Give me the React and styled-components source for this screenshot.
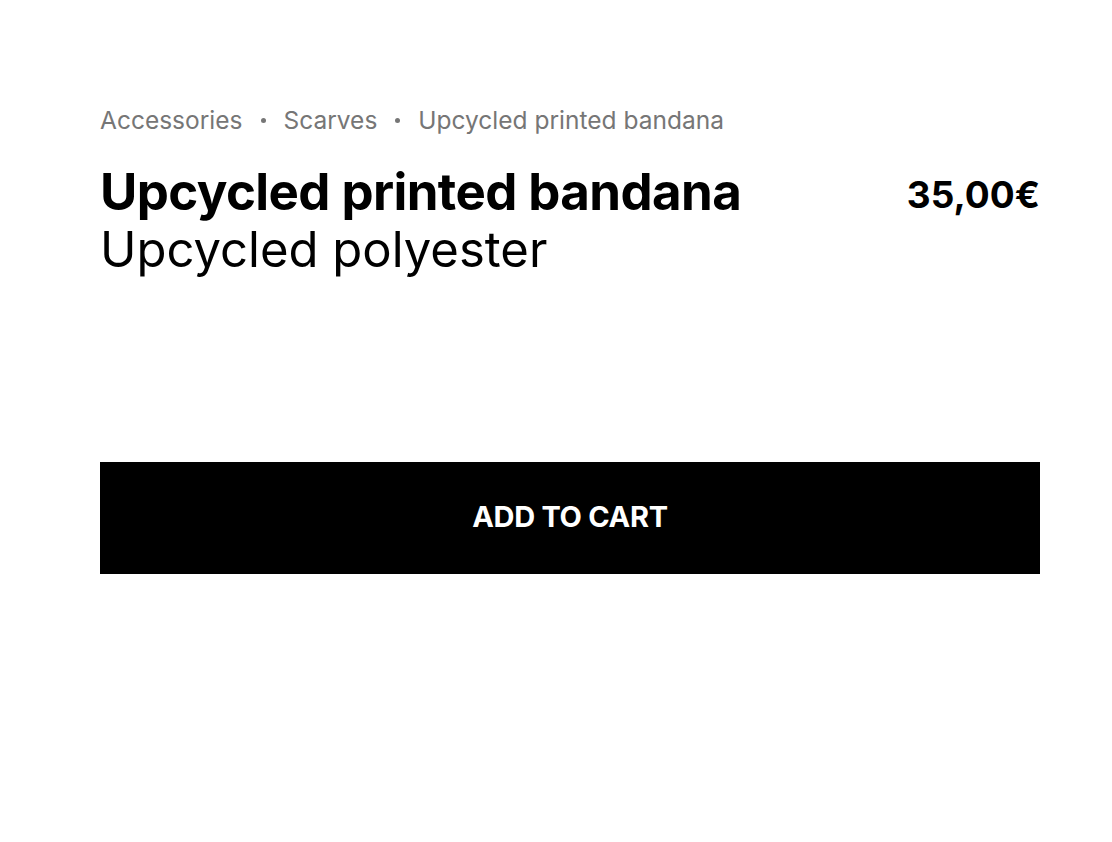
import React from 'react';
import styled, { createGlobalStyle } from 'styled-components';

const GlobalStyle = createGlobalStyle`
  body {
    margin: 0;
    background: #ffffff;
    font-family: "Inter", "Liberation Sans", sans-serif;
    color: #000000;
  }
`;

const Page = styled.div`
  padding: 104px 72px 0 100px;
  display: flex;
  flex-direction: column;
`;

const Breadcrumbs = styled.nav`
  display: flex;
  align-items: center;
  gap: 18px;
  font-size: 24.5px;
  line-height: 32px;
  color: #767676;
`;

const Crumb = styled.span`
  white-space: nowrap;
`;

const Dot = styled.span`
  width: 5px;
  height: 5px;
  border-radius: 50%;
  background: #767676;
`;

const Header = styled.div`
  display: flex;
  justify-content: space-between;
  align-items: flex-start;
  margin-top: 27px;
`;

const Titles = styled.div`
  display: flex;
  flex-direction: column;
`;

const Title = styled.h1`
  margin: 0;
  font-size: 51px;
  line-height: 58px;
  font-weight: 700;
  letter-spacing: -0.6px;
`;

const Subtitle = styled.h2`
  margin: 0;
  font-size: 49px;
  line-height: 58px;
  font-weight: 400;
`;

const Price = styled.div`
  font-size: 37px;
  line-height: 48px;
  font-weight: 700;
  margin-top: 8px;
`;

const AddButton = styled.button`
  margin-top: 183px;
  height: 112px;
  border: none;
  background: #000000;
  color: #ffffff;
  font-family: inherit;
  font-size: 29px;
  font-weight: 700;
  letter-spacing: -0.3px;
  padding: 0 0 4px;
  cursor: pointer;
`;

export default function App() {
  const crumbs = ['Accessories', 'Scarves', 'Upcycled printed bandana'];
  return (
    <>
      <GlobalStyle />
      <Page>
        <Breadcrumbs>
          {crumbs.map((c, i) => (
            <React.Fragment key={c}>
              {i > 0 && <Dot />}
              <Crumb>{c}</Crumb>
            </React.Fragment>
          ))}
        </Breadcrumbs>
        <Header>
          <Titles>
            <Title>Upcycled printed bandana</Title>
            <Subtitle>Upcycled polyester</Subtitle>
          </Titles>
          <Price>35,00€</Price>
        </Header>
        <AddButton>ADD TO CART</AddButton>
      </Page>
    </>
  );
}
